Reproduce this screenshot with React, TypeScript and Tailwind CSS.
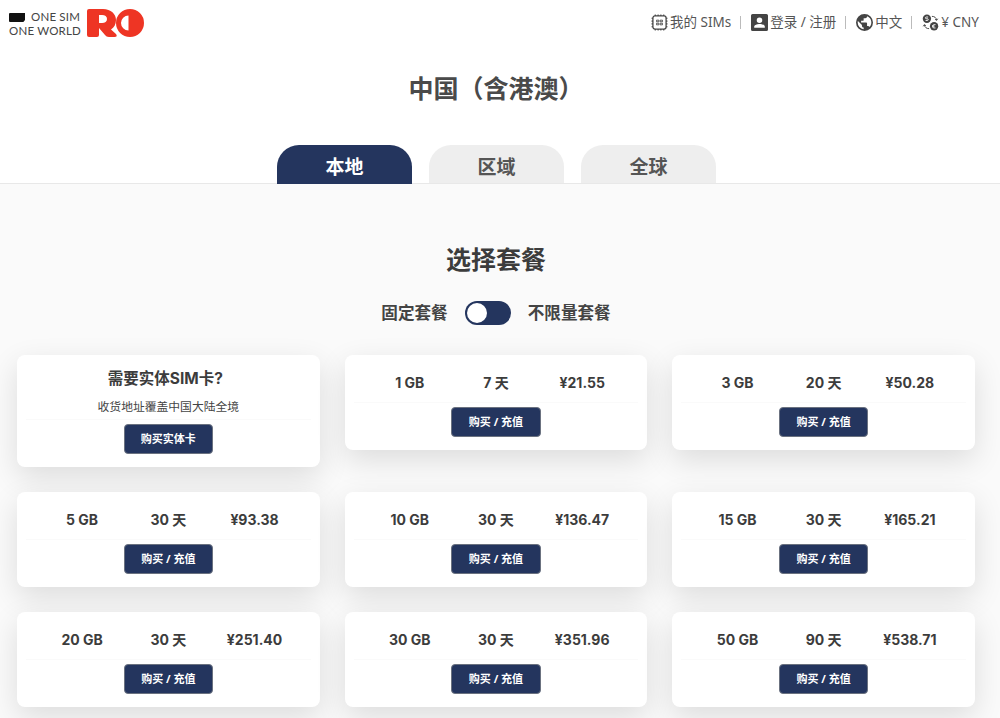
import { Fragment } from "react";

const plans = [
  ["1 GB", "7 天", "¥21.55"],
  ["3 GB", "20 天", "¥50.28"],
  ["5 GB", "30 天", "¥93.38"],
  ["10 GB", "30 天", "¥136.47"],
  ["15 GB", "30 天", "¥165.21"],
  ["20 GB", "30 天", "¥251.40"],
  ["30 GB", "30 天", "¥351.96"],
  ["50 GB", "90 天", "¥538.71"],
];

const cardClass =
  "rounded-lg bg-white shadow-[0_10px_30px_rgba(0,0,0,0.12)] px-[9px]";
const btnClass =
  "w-[89.6px] h-[30px] rounded-[4px] border border-[#6b7280] bg-[#24355e] text-white text-[11px] font-bold flex items-center justify-center";

function SimIcon() {
  return (
    <svg width="17" height="17" viewBox="0 0 16 16" fill="none" stroke="#444" strokeWidth="1.2">
      <rect x="1.8" y="1.8" width="12.4" height="12.4" rx="2" />
      <path d="M4 0.5v1.3M6.7 0.5v1.3M9.3 0.5v1.3M12 0.5v1.3M4 14.2v1.3M6.7 14.2v1.3M9.3 14.2v1.3M12 14.2v1.3M0.5 4h1.3M0.5 6.7h1.3M0.5 9.3h1.3M0.5 12h1.3M14.2 4h1.3M14.2 6.7h1.3M14.2 9.3h1.3M14.2 12h1.3" strokeWidth="1" />
      <path d="M5.200 5.800h2.200v1.500h-2.200zM8.600 5.800h2.200v1.500h-2.200zM5.200 8.700h2.200v1.500h-2.200zM8.600 8.700h2.200v1.500h-2.200z" strokeWidth=".8" />
    </svg>
  );
}

function UserIcon() {
  return (
    <svg width="17" height="17" viewBox="0 0 16 16">
      <path
        fill="#444"
        fillRule="evenodd"
        d="M1.5 0h13A1.5 1.5 0 0 1 16 1.5v13a1.5 1.5 0 0 1-1.5 1.5h-13A1.5 1.5 0 0 1 0 14.5v-13A1.5 1.5 0 0 1 1.5 0ZM8 3.200a2.600 2.600 0 1 0 0 5.200 2.600 2.600 0 0 0 0-5.200ZM3 13h10v-1.200c0-1.600-3.300-2.400-5-2.400s-5 .8-5 2.400V13Z"
      />
    </svg>
  );
}

function GlobeIcon() {
  return (
    <svg width="17" height="17" viewBox="0 0 24 24">
      <path
        fill="#444"
        d="M12 0a12 12 0 1 0 0 24 12 12 0 0 0 0-24Zm-1.200 21.500A9.600 9.600 0 0 1 2.400 12c0-.7.1-1.400.3-2.100L8.400 15.600v1.200a2.400 2.400 0 0 0 2.400 2.400v2.300Zm8.300-3a2.400 2.400 0 0 0-2.300-1.700h-1.200v-3.600a1.200 1.200 0 0 0-1.200-1.200H7.200V9.600h2.400a1.200 1.200 0 0 0 1.200-1.200V6h2.400a2.400 2.400 0 0 0 2.400-2.400v-.5a9.600 9.600 0 0 1 3.500 15.400Z"
      />
    </svg>
  );
}

function CurrencyIcon() {
  return (
    <svg width="17" height="17" viewBox="0 0 18 18" fill="none">
      <circle cx="5.200" cy="5" r="4.400" fill="#444" />
      <circle cx="12.800" cy="13" r="4.400" fill="#444" />
      <path d="M10.500 2.500c2.600 0 4.600 1.300 5 4M16.700 5l-1.200 1.700L13.800 5.600M7.500 15.500c-2.600 0-4.600-1.300-5-4M1.300 13l1.200-1.700 1.700 1.100" stroke="#444" strokeWidth="1" />
      <path d="M6.500 3.200H4.600a.9.9 0 0 0 0 1.800h1.100a.9.9 0 0 1 0 1.800H3.800" stroke="#fff" strokeWidth="1" />
      <path d="M14.300 11.200h-1.400c-1 0-1.500.8-1.500 1.800s.5 1.800 1.500 1.800h1.400M10.600 12.500h2.600M10.600 13.600h2.600" stroke="#fff" strokeWidth=".9" />
    </svg>
  );
}

function Logo() {
  return (
    <div className="flex items-start">
      <div className="flex flex-col w-[78px] ml-[9px] mt-[1px] text-[#444] text-[11.5px] leading-[14px] tracking-[0.2px] font-['Lato',sans-serif]">
        <div className="flex items-center">
          <svg width="16" height="9" viewBox="0 0 16 9" className="mt-[1px]">
            <path fill="#111" d="M1 0h15v7l-1.600 2H1a1 1 0 0 1-1-1V1a1 1 0 0 1 1-1Z" />
          </svg>
          <span className="ml-[6px]">ONE SIM</span>
        </div>
        <span>ONE WORLD</span>
      </div>
      <svg width="57" height="28" viewBox="0 0 57 28">
        <path
          fill="#ee3524"
          fillRule="evenodd"
          d="M2 0H16C24 0 29 5 29 11C29 15.500 27 18.500 24 20.500L29 25Q31 28 27.500 28H22C20 28 19 27 18 26L12 19V26Q12 28 10 28H2Q0 28 0 26V2Q0 0 2 0ZM12 6V14H15C18 14 20 12.500 20 10C20 7.500 18 6 15 6Z"
        />
        <path
          fill="#ee3524"
          fillRule="evenodd"
          d="M43 0a14 14 0 1 1 0 28 14 14 0 0 1 0-28ZM41.500 6.500a7.500 7.500 0 0 0 0 15V6.500Z"
        />
      </svg>
    </div>
  );
}

function Header() {
  const items = [
    { icon: <SimIcon />, label: "我的 SIMs" },
    { icon: <UserIcon />, label: "登录 / 注册" },
    { icon: <GlobeIcon />, label: "中文" },
    { icon: <CurrencyIcon />, label: "¥ CNY" },
  ];
  return (
    <header className="flex h-[44px] items-start justify-between pr-[21px] pt-[9px] bg-white">
      <Logo />
      <nav className="flex items-center h-[26px] text-[13.5px] text-[#555]">
        {items.map((it, i) => (
          <Fragment key={it.label}>
            {i > 0 && <span className="ml-[9px] mr-[10px] h-[13px] w-px bg-[#bbb]" />}
            <span className="flex items-center gap-[2px]">
              {it.icon}
              <span>{it.label}</span>
            </span>
          </Fragment>
        ))}
      </nav>
    </header>
  );
}

function Tabs() {
  const tabs = ["本地", "区域", "全球"];
  return (
    <div className="flex justify-center gap-[17px] pr-[7px] border-b border-[#e8e8e8]">
      {tabs.map((t, i) => (
        <div
          key={t}
          className={
            i === 0
              ? "w-[135px] h-[39px] -mb-px rounded-t-[22px] bg-[#24355e] text-white text-[19px] font-bold flex items-center justify-center pt-[6px]"
              : "w-[135px] h-[38px] rounded-t-[22px] bg-[#eeeeee] text-[#555] text-[19px] font-bold flex items-center justify-center pt-[6px]"
          }
        >
          {t}
        </div>
      ))}
    </div>
  );
}

function Toggle() {
  return (
    <div className="h-[24px] w-[46px] rounded-full bg-[#24355e] p-[2px]">
      <div className="h-[20px] w-[20px] rounded-full bg-white" />
    </div>
  );
}

function PlanCard({ plan }: { plan: string[] }) {
  return (
    <div className={`${cardClass} h-[95px] flex flex-col items-center`}>
      <div className="h-[48px] w-full border-b border-[#fafafa] grid grid-cols-3 px-[13px] items-center text-center text-[14px] font-bold text-[#3c3c3c] pt-[7px] font-['Inter','Noto_Sans_CJK_SC',sans-serif]">
        {plan.map((v) => (
          <span key={v}>{v}</span>
        ))}
      </div>
      <button className={`${btnClass} mt-[4px]`}>购买 / 充值</button>
    </div>
  );
}

export default function App() {
  return (
    <div className="min-h-[718px] h-[718px] overflow-hidden bg-white font-['Noto_Sans','Noto_Sans_CJK_SC',sans-serif]">
      <Header />
      <h1 className="mt-[26px] mb-[39px] pr-[8px] h-[36px] leading-[36px] text-center text-[25px] font-bold text-[#4a4a4a]">
        中国（含港澳）
      </h1>
      <Tabs />
      <main className="bg-[#fafafa] h-[600px] pl-[17px] pr-[25px]">
        <h2 className="pt-[57px] pb-[24px] leading-[36px] text-center text-[25px] font-bold text-[#3c3c3c]">
          选择套餐
        </h2>
        <div className="flex items-center justify-center gap-[17px] h-[24px] text-[16.6px] font-bold text-[#444]">
          <span>固定套餐</span>
          <Toggle />
          <span>不限量套餐</span>
        </div>
        <div className="mt-[30px] grid grid-cols-3 gap-x-[25px] gap-y-[25px] items-start">
          <div className={`${cardClass} h-[112px] flex flex-col items-center`}>
            <div className="pt-[13px] pr-[6px] text-[15.500px] leading-[22px] font-bold text-[#3c3c3c] font-['Inter','Noto_Sans_CJK_SC',sans-serif]">
              需要实体SIM卡?
            </div>
            <div className="mt-[8px] h-[22px] w-full border-b border-[#fafafa] text-center text-[11.800px] text-[#444]">
              收货地址覆盖中国大陆全境
            </div>
            <button className={`${btnClass} mt-[4px]`}>购买实体卡</button>
          </div>
          {plans.map((p) => (
            <PlanCard key={p[0]} plan={p} />
          ))}
        </div>
      </main>
    </div>
  );
}
